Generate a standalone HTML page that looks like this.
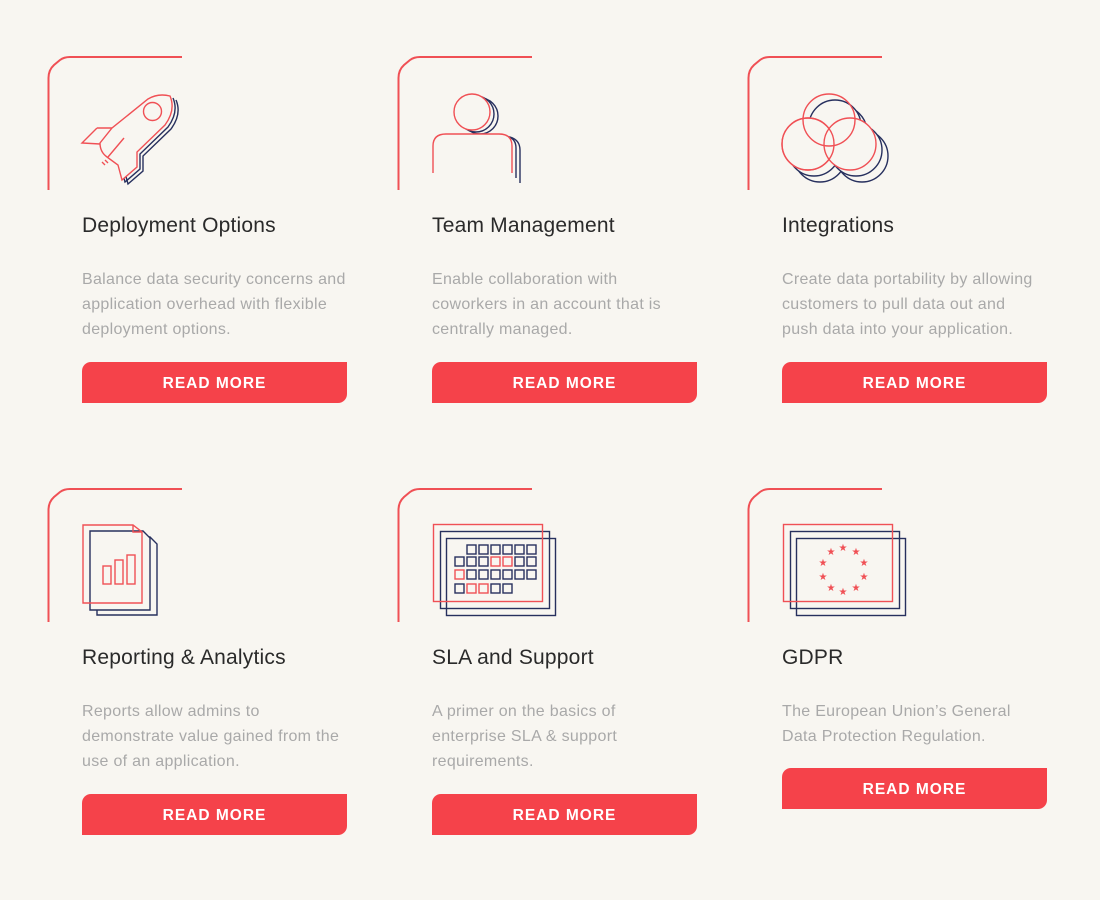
<!DOCTYPE html>
<html><head><meta charset="utf-8"><style>
html,body{margin:0;padding:0}
body{width:1100px;height:900px;background:#f8f6f1;position:relative;overflow:hidden;font-family:"Liberation Sans",sans-serif}
svg.g{position:absolute;left:0;top:0}
.t{position:absolute;font-size:21px;color:#2a2a2a;white-space:nowrap;line-height:26px;letter-spacing:0.2px}
.d{position:absolute;font-size:16px;color:#a9a9a9;line-height:25px;white-space:nowrap;letter-spacing:0.3px}
.b{position:absolute;width:265px;height:41px;background:#f5424a;color:#fff;font-weight:bold;font-size:15.5px;letter-spacing:1px;text-align:center;line-height:44px;border-radius:9px 0 9px 0}
</style></head><body>
<svg class="g" width="1100" height="900" viewBox="0 0 1100 900" fill="none" stroke-width="1.4">
<g stroke="#f05055" stroke-width="2">
<path d="M48.5,190 V78 Q48.5,70 54,65 L60,60 Q64,57 70,57 H182"/>
<path d="M398.5,190 V78 Q398.5,70 404,65 L410,60 Q414,57 420,57 H532"/>
<path d="M748.5,190 V78 Q748.5,70 754,65 L760,60 Q764,57 770,57 H882"/>
<path d="M48.5,622 V510 Q48.5,502 54,497 L60,492 Q64,489 70,489 H182"/>
<path d="M398.5,622 V510 Q398.5,502 404,497 L410,492 Q414,489 420,489 H532"/>
<path d="M748.5,622 V510 Q748.5,502 754,497 L760,492 Q764,489 770,489 H882"/>
</g>
<!-- rocket -->
<g>
<path transform="translate(6,4)" stroke="#27305e" d="M170,96 Q176,110 165,125 L137,152 L137,167 L122,180 L118,165"/>
<path transform="translate(3,2)" stroke="#27305e" d="M170,96 Q176,110 165,125 L137,152 L137,167 L122,180 L118,165"/>
<path stroke="#f05055" fill="#f8f6f1" d="M170,96 Q158,93 148,99 L112,128 L100,143 Q100,152 107,157 L118,165 L122,180 L137,167 L137,152 L165,125 Q176,110 170,96 Z"/>
<path stroke="#f05055" d="M97,128 H112 M97,128 L82,143 L100,144 M124,138 L108,157 M105,160 L108,163 M102,162 L105,165"/>
<circle cx="152.5" cy="111.5" r="9" stroke="#f05055"/>
</g>
<!-- person -->
<g>
<circle cx="480" cy="116" r="18" stroke="#27305e"/>
<circle cx="476" cy="114" r="18" stroke="#27305e" fill="#f8f6f1"/>
<circle cx="472" cy="112" r="18" stroke="#f05055" fill="#f8f6f1"/>
<path stroke="#27305e" d="M520,183 V150 Q520,140 510,137 M516,178 V148 Q516,138 506,136"/>
<path stroke="#f05055" fill="#f8f6f1" d="M433,173 V146 Q433,134 446,134 H499 Q512,134 512,146 V173"/>
</g>
<!-- circles -->
<g>
<g transform="translate(12,12)" stroke="#27305e"><circle cx="829" cy="120" r="26"/><circle cx="808" cy="144" r="26"/><circle cx="850" cy="144" r="26"/></g>
<g transform="translate(6,6)" stroke="#27305e" fill="#f8f6f1"><circle cx="829" cy="120" r="26"/><circle cx="808" cy="144" r="26"/><circle cx="850" cy="144" r="26"/></g>
<g stroke="#f05055" fill="#f8f6f1"><circle cx="808" cy="144" r="26"/><circle cx="850" cy="144" r="26"/></g>
<g stroke="#f05055"><circle cx="829" cy="120" r="26"/><circle cx="808" cy="144" r="26"/></g>
</g>
<!-- documents -->
<g>
<path stroke="#27305e" d="M97,537 H150 L157,544 V615 H97 Z"/>
<path stroke="#27305e" fill="#f8f6f1" d="M90,531 H143 L150,538 V610 H90 Z"/>
<path stroke="#f05055" d="M83,525 H133 L142,532 V603 H83 Z M133,525 V532 H142"/>
<g stroke="#f05055"><rect x="103" y="566" width="8" height="18"/><rect x="115" y="560" width="8" height="24"/><rect x="127" y="555" width="8" height="29"/></g>
</g>
<!-- calendar -->
<g>
<rect x="446.5" y="538.5" width="109" height="77" stroke="#27305e"/>
<rect x="440.5" y="531.5" width="109" height="77" stroke="#27305e"/>
<rect x="433.5" y="524.5" width="109" height="77" stroke="#f05055"/>
<g stroke="#27305e">
<rect x="467" y="545" width="9" height="9"/><rect x="479" y="545" width="9" height="9"/><rect x="491" y="545" width="9" height="9"/><rect x="503" y="545" width="9" height="9"/><rect x="515" y="545" width="9" height="9"/><rect x="527" y="545" width="9" height="9"/>
<rect x="455" y="557" width="9" height="9"/><rect x="467" y="557" width="9" height="9"/><rect x="479" y="557" width="9" height="9"/><rect x="515" y="557" width="9" height="9"/><rect x="527" y="557" width="9" height="9"/>
<rect x="467" y="570" width="9" height="9"/><rect x="479" y="570" width="9" height="9"/><rect x="491" y="570" width="9" height="9"/><rect x="503" y="570" width="9" height="9"/><rect x="515" y="570" width="9" height="9"/><rect x="527" y="570" width="9" height="9"/>
<rect x="455" y="584" width="9" height="9"/><rect x="491" y="584" width="9" height="9"/><rect x="503" y="584" width="9" height="9"/>
</g>
<g stroke="#f05055">
<rect x="491" y="557" width="9" height="9"/><rect x="503" y="557" width="9" height="9"/>
<rect x="455" y="570" width="9" height="9"/>
<rect x="467" y="584" width="9" height="9"/><rect x="479" y="584" width="9" height="9"/>
</g>
</g>
<!-- gdpr -->
<g>
<rect x="796.5" y="538.5" width="109" height="77" stroke="#27305e"/>
<rect x="790.5" y="531.5" width="109" height="77" stroke="#27305e"/>
<rect x="783.5" y="524.5" width="109" height="77" stroke="#f05055"/>
<g fill="#f05055" stroke="none" font-size="10" text-anchor="middle" font-family="DejaVu Sans">
<text x="843" y="551">★</text><text x="831" y="555">★</text><text x="856" y="555">★</text>
<text x="823" y="566">★</text><text x="864" y="566">★</text>
<text x="823" y="580">★</text><text x="864" y="580">★</text>
<text x="831" y="591">★</text><text x="856" y="591">★</text><text x="843" y="595">★</text>
</g>
</g>
</svg>

<div class="t" style="left:82px;top:213px">Deployment Options</div>
<div class="t" style="left:432px;top:213px">Team Management</div>
<div class="t" style="left:782px;top:213px">Integrations</div>
<div class="d" style="left:82px;top:267px">Balance data security concerns and<br>application overhead with flexible<br>deployment options.</div>
<div class="d" style="left:432px;top:267px">Enable collaboration with<br>coworkers in an account that is<br>centrally managed.</div>
<div class="d" style="left:782px;top:267px">Create data portability by allowing<br>customers to pull data out and<br>push data into your application.</div>
<div class="b" style="left:82px;top:362px">READ MORE</div>
<div class="b" style="left:432px;top:362px">READ MORE</div>
<div class="b" style="left:782px;top:362px">READ MORE</div>

<div class="t" style="left:82px;top:645px">Reporting &amp; Analytics</div>
<div class="t" style="left:432px;top:645px">SLA and Support</div>
<div class="t" style="left:782px;top:645px">GDPR</div>
<div class="d" style="left:82px;top:699px">Reports allow admins to<br>demonstrate value gained from the<br>use of an application.</div>
<div class="d" style="left:432px;top:699px">A primer on the basics of<br>enterprise SLA &amp; support<br>requirements.</div>
<div class="d" style="left:782px;top:699px">The European Union’s General<br>Data Protection Regulation.</div>
<div class="b" style="left:82px;top:794px">READ MORE</div>
<div class="b" style="left:432px;top:794px">READ MORE</div>
<div class="b" style="left:782px;top:768px">READ MORE</div>
</body></html>
